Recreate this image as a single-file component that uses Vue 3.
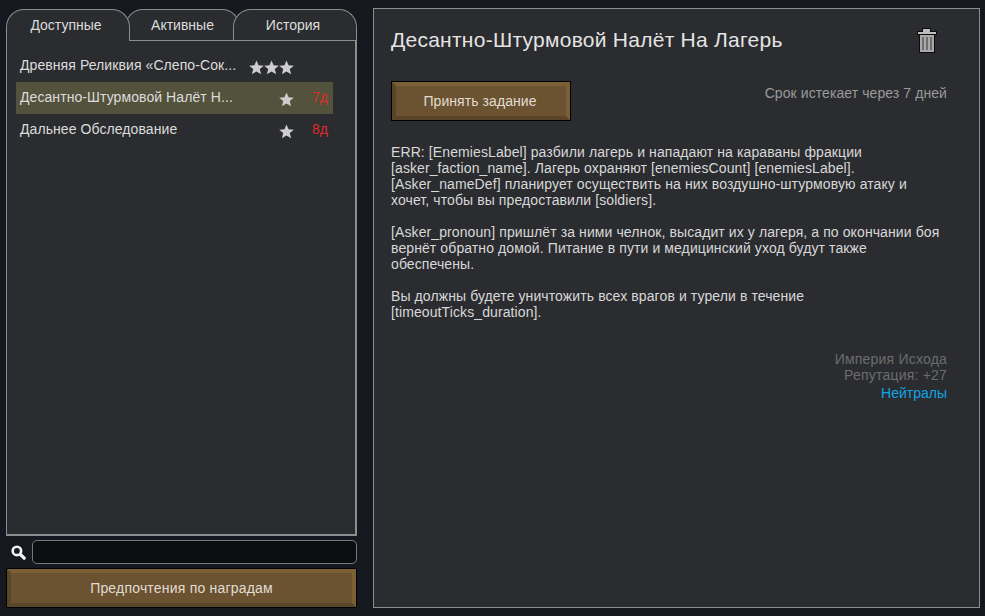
<template>
  <div class="screen">
    <div class="left">
      <div class="tabs">
        <div v-for="(t, i) in tabs" :key="t" class="tab" :class="{ active: i === 0 }">{{ t }}</div>
      </div>
      <div class="listPanel">
        <div v-for="q in quests" :key="q.name" class="row" :class="{ selected: q.selected }">
          <span class="rowName">{{ q.name }}</span>
          <span class="stars">
            <svg v-for="n in q.stars" :key="n" class="star" viewBox="0 0 16 16">
              <path d="M8 0.5 L10.2 5.7 L15.8 6.1 L11.5 9.7 L12.9 15.3 L8 12.3 L3.1 15.3 L4.5 9.7 L0.2 6.1 L5.8 5.7 Z" fill="#cdcdcd" />
            </svg>
          </span>
          <span class="days">{{ q.days }}</span>
        </div>
      </div>
      <div class="searchRow">
        <svg class="searchIcon" viewBox="0 0 16 16">
          <circle cx="6.3" cy="6.3" r="4.5" fill="none" stroke="#f2f2f2" stroke-width="2.8" />
          <path d="M10 10 L14 14" stroke="#f2f2f2" stroke-width="3.6" stroke-linecap="round" />
        </svg>
        <div class="searchBox"></div>
      </div>
      <div class="btn wide"><span>Предпочтения по наградам</span></div>
    </div>

    <div class="detail">
      <div class="head">
        <div class="title">Десантно-Штурмовой Налёт На Лагерь</div>
        <svg class="trash" viewBox="0 0 20 25">
          <path d="M5 0 H14 V3 H20 V7 H18 V25 H2 V7 H0 V3 H5 Z" fill="#0b0b0b" />
          <rect x="1" y="4" width="18" height="2" fill="#bdbdbd" />
          <rect x="6" y="1" width="7" height="3" fill="#bdbdbd" />
          <rect x="3" y="7" width="14" height="17" fill="#a9a9a9" />
          <rect x="5" y="9" width="2" height="13" fill="#6e6e6e" />
          <rect x="9" y="9" width="2" height="13" fill="#6e6e6e" />
          <rect x="13" y="9" width="2" height="13" fill="#6e6e6e" />
        </svg>
      </div>
      <div class="actionRow">
        <div class="btn accept"><span>Принять задание</span></div>
        <div class="expires">Срок истекает через 7 дней</div>
      </div>
      <div class="desc">
        <p>ERR: [EnemiesLabel] разбили лагерь и нападают на караваны фракции<br>[asker_faction_name]. Лагерь охраняют [enemiesCount] [enemiesLabel].<br>[Asker_nameDef] планирует осуществить на них воздушно-штурмовую атаку и<br>хочет, чтобы вы предоставили [soldiers].</p>
        <p>[Asker_pronoun] пришлёт за ними челнок, высадит их у лагеря, а по окончании боя<br>вернёт обратно домой. Питание в пути и медицинский уход будут также<br>обеспечены.</p>
        <p>Вы должны будете уничтожить всех врагов и турели в течение<br>[timeoutTicks_duration].</p>
      </div>
      <div class="faction">
        <div>Империя Исхода</div>
        <div>Репутация: +27</div>
        <div class="neutral">Нейтралы</div>
      </div>
    </div>
  </div>
</template>

<script setup>
const tabs = ['Доступные', 'Активные', 'История']

const quests = [
  { name: 'Древняя Реликвия «Слепо-Сок...', stars: 3, days: '' },
  { name: 'Десантно-Штурмовой Налёт Н...', stars: 1, days: '7д', selected: true },
  { name: 'Дальнее Обследование', stars: 1, days: '8д' },
]
</script>

<style>
html, body {
  margin: 0;
  background: #15191f;
}
</style>

<style scoped>
.screen {
  width: 985px;
  height: 616px;
  box-sizing: border-box;
  padding: 8px 5px 8px 6px;
  display: flex;
  gap: 16px;
  background: #15191f;
  font-family: "Liberation Sans", Arial, sans-serif;
  font-size: 14px;
  color: #dcdcdc;
  overflow: hidden;
}

.left {
  width: 351px;
  display: flex;
  flex-direction: column;
}

.tabs {
  display: flex;
  height: 32px;
  margin-top: 1px;
  flex-shrink: 0;
  position: relative;
  z-index: 1;
}

.tab {
  box-sizing: border-box;
  height: 31px;
  text-align: center;
  line-height: 30px;
  font-size: 14px;
  background: #2b2c2f;
  border: 1px solid #8b8d8e;
  border-bottom: 0;
  border-radius: 18px 18px 0 0;
}

.tab:first-child {
  flex: 0 0 124px;
  padding-right: 4px;
}

.tab:nth-child(2) {
  flex: 0 0 115px;
  margin-left: -5px;
}

.tab:nth-child(3) {
  flex: 0 0 124px;
  margin-left: -7px;
  padding-right: 4px;
}

.tab.active {
  height: 32px;
  z-index: 2;
}

.listPanel {
  flex: 1;
  box-sizing: border-box;
  margin-top: -1px;
  padding: 9px 22px 0 9px;
  background: #2b2c2f;
  border: 2px solid #8b8d8e;
  border-top-width: 1px;
  border-left-width: 1px;
}

.row {
  height: 32px;
  display: flex;
  align-items: center;
  padding: 0 4px;
  font-size: 14px;
}

.row.selected {
  background: #53523d;
}

.rowName {
  flex: 1;
  padding-bottom: 2px;
  white-space: nowrap;
  letter-spacing: 0.08px;
}

.stars {
  display: flex;
  margin-top: 2px;
}

.star {
  width: 15px;
  height: 15px;
  display: block;
}

.days {
  width: 35px;
  padding-bottom: 2px;
  padding-right: 1px;
  box-sizing: border-box;
  text-align: right;
  color: #dd2c2c;
}

.searchRow {
  height: 32px;
  flex-shrink: 0;
  display: flex;
  align-items: center;
  gap: 6px;
  padding-left: 5px;
}

.searchIcon {
  width: 15px;
  height: 15px;
}

.searchBox {
  flex: 1;
  height: 24px;
  box-sizing: border-box;
  background: #0c0e11;
  border: 1px solid #77797b;
  border-radius: 5px;
}

.btn {
  box-sizing: border-box;
  border: 1px solid #000;
}

.btn span {
  display: block;
  height: 100%;
  box-sizing: border-box;
  text-align: center;
  background: #6b5230;
  border-style: solid;
  border-color: #7b5f35 #7b5f35 #5b4528 #5b4528;
  border-width: 4px;
  font-size: 14px;
  color: #e0dcd2;
}

.btn.wide {
  height: 40px;
  flex-shrink: 0;
}

.btn.wide span {
  line-height: 30px;
  letter-spacing: 0.2px;
}

.detail {
  flex: 1;
  box-sizing: border-box;
  background: #2b2c2f;
  border: 1px solid #8b8d8e;
  padding: 0 32px 0 17px;
}

.head {
  height: 72px;
  display: flex;
  justify-content: space-between;
  padding-top: 15px;
  box-sizing: border-box;
}

.title {
  font-size: 21px;
  letter-spacing: 0.26px;
  line-height: 32px;
  color: #e4e4e4;
}

.trash {
  width: 20px;
  height: 25px;
  margin: 4px 10px 0 0;
}

.actionRow {
  display: flex;
  justify-content: space-between;
}

.accept {
  width: 180px;
  height: 40px;
}

.accept span {
  padding-right: 2px;
  line-height: 30px;
  letter-spacing: 0.07px;
}

.expires {
  color: #9a9a9a;
  line-height: 24px;
  letter-spacing: 0.08px;
}

.desc {
  margin-top: 23px;
  font-size: 14px;
  letter-spacing: 0.1px;
  line-height: 16px;
  color: #d8d8d8;
}

.desc p {
  margin: 0 0 16px;
}

.faction {
  margin-top: 31px;
  text-align: right;
  line-height: 16px;
  letter-spacing: 0.2px;
  color: #6c6c6c;
}

.neutral {
  margin-top: 2px;
  letter-spacing: 0;
  color: #0ea5e6;
}
</style>
